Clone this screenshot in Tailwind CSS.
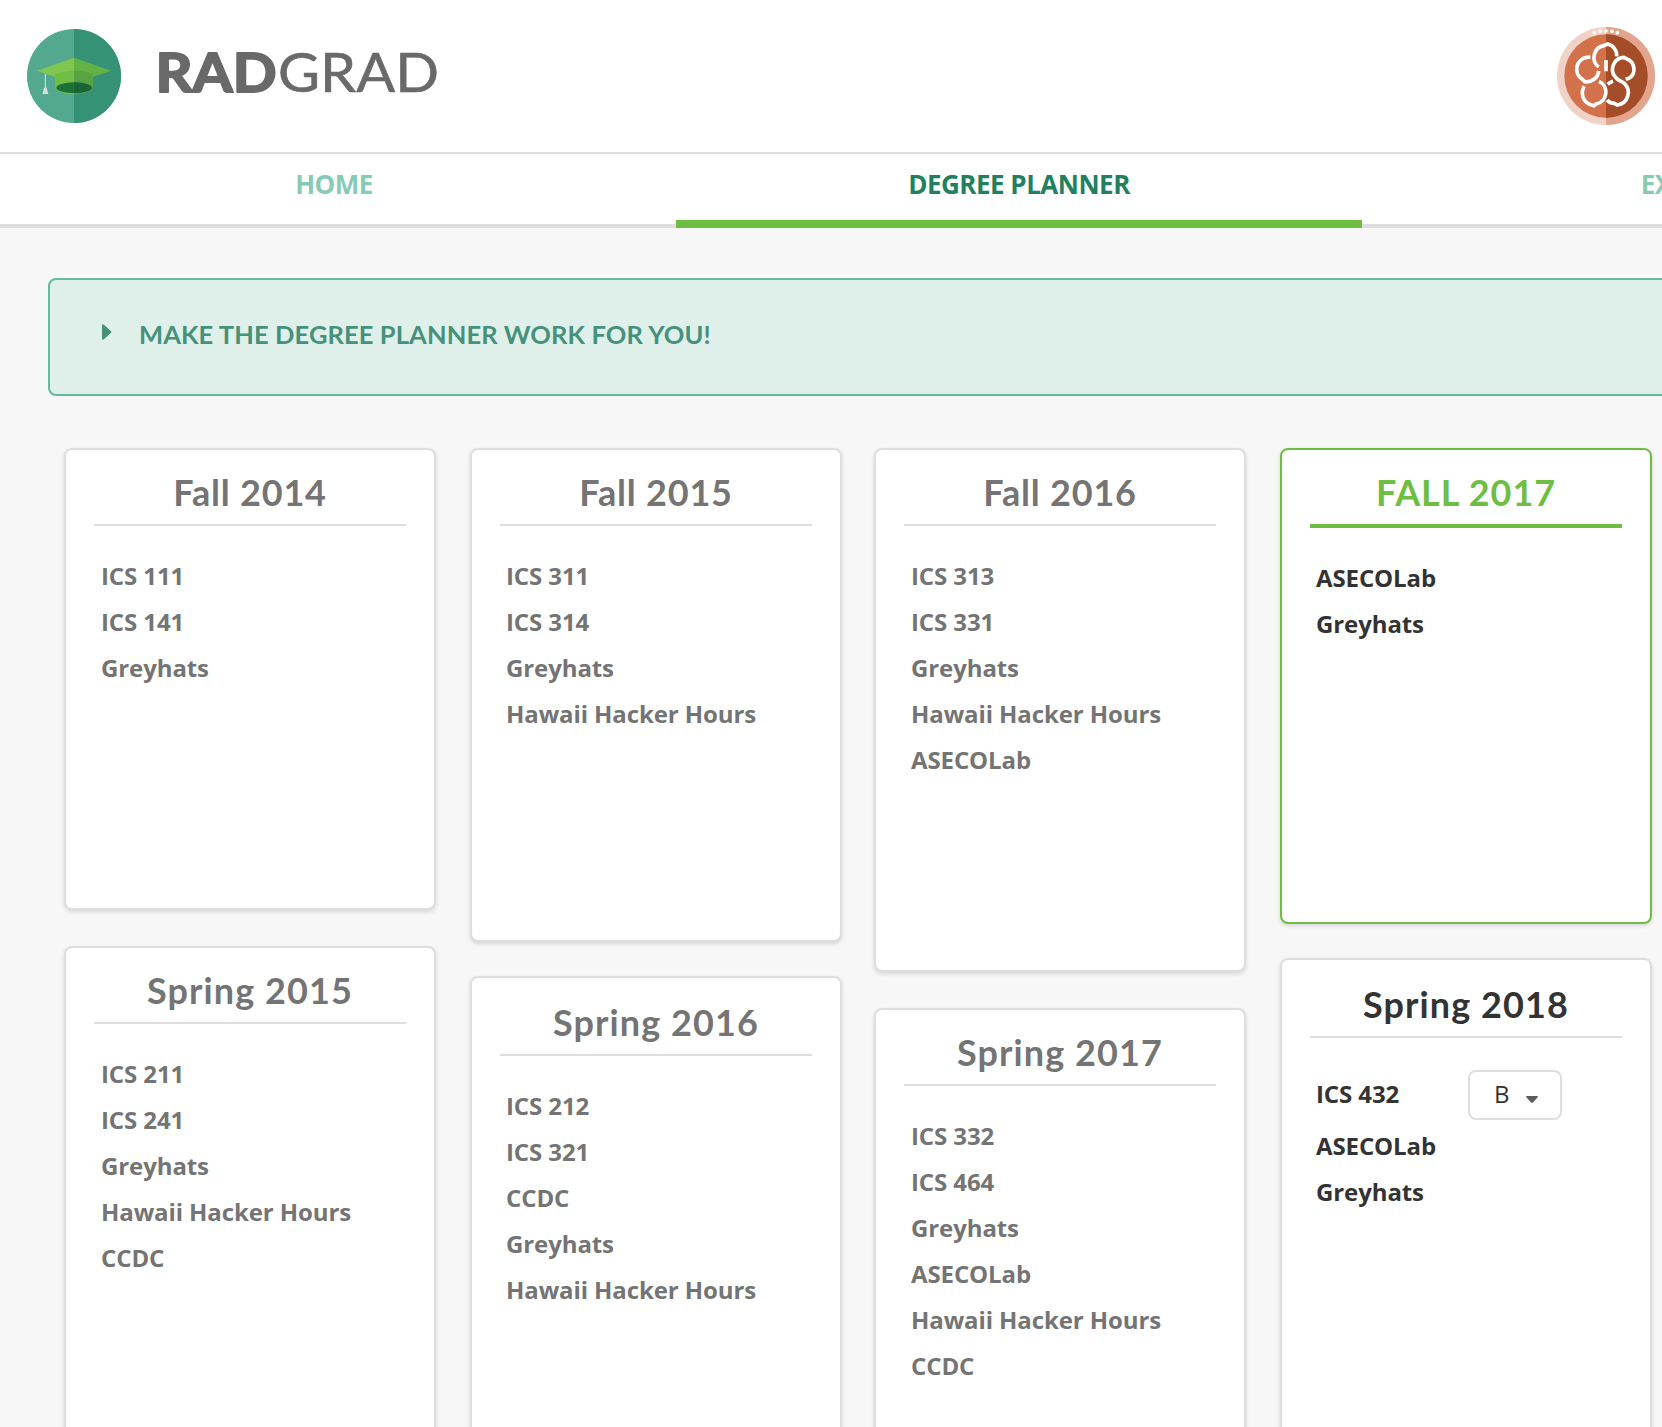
<!DOCTYPE html>
<html lang="en">
<head>
<meta charset="utf-8">
<title>RadGrad - Degree Planner</title>
<script src="https://cdn.jsdelivr.net/npm/@tailwindcss/browser@4"></script>
</head>
<body class="bg-[#f7f7f7]">
<div class="h-[1427px] w-[1662px] overflow-hidden bg-[#f7f7f7] font-['Open_Sans',sans-serif] text-[#333]">

<header class="flex h-[154px] items-start justify-between border-b-2 border-[#dedede] bg-white pr-[7px] pl-[27px]">
  <div class="flex items-start">
    <svg class="mt-[29px] size-[94px]" viewBox="81 87 282 282">
      <circle cx="222" cy="228" r="141" fill="#53a890"/>
      <path d="M222 87a141 141 0 0 1 0 282z" fill="#359277"/>
      <path d="M110 212L222 173V250z" fill="#80c651"/>
      <path d="M334 212L222 173V250z" fill="#63b246"/>
      <path d="M165 224q10-11 57-12v71q-50-1-57-22z" fill="#70be44"/>
      <path d="M279 224q-10-11-57-12v71q50-1 57-22z" fill="#5aa343"/>
      <ellipse cx="222" cy="263" rx="53" ry="16" fill="#1c7039"/>
      <path d="M222 247a53 16 0 0 1 0 32z" fill="#186437"/>
      <path d="M136 222V264" stroke="#dfe5e3" stroke-width="3"/>
      <path d="M132 263h8l5 19h-18z" fill="#dcdcdc"/>
    </svg>
    <svg class="mt-[36px] ml-[29px] h-[72px] w-[300px]" viewBox="0 0 300 72" fill="#696969" stroke="#696969" stroke-linejoin="round" font-family="Lato, sans-serif" font-size="54">
      <text x="5.500" y="55.500" font-weight="700" stroke-width="2" textLength="121" lengthAdjust="spacingAndGlyphs">RAD</text>
      <text x="128" y="55.500" font-weight="400" stroke-width="0.600" textLength="161" lengthAdjust="spacingAndGlyphs">GRAD</text>
    </svg>
  </div>
  <svg class="mt-[27px] size-[98px]" viewBox="51 50 294 294">
    <circle cx="198" cy="197" r="147" fill="#f1d2c6"/>
    <path d="M198 50a147 147 0 0 1 0 294z" fill="#e2a48d"/>
    <circle cx="198" cy="197" r="125" fill="#d3714a"/>
    <path d="M198 72a125 125 0 0 1 0 250z" fill="#a54d29"/>
    <g fill="#fff"><circle cx="163" cy="67" r="5.500"/><circle cx="180" cy="63" r="5.500"/><circle cx="198" cy="62" r="5.500"/><circle cx="216" cy="63" r="5.500"/><circle cx="232" cy="67" r="5.500"/></g>
    <g fill="none" stroke="#fff" stroke-width="11">
      <path d="M176 170A36 36 0 0 1 191 106L203 101A35 35 0 0 1 230 138"/>
      <path d="M151 140L140 141A36 36 0 0 0 127 207L135 214A36 36 0 0 0 176 182"/>
      <path d="M257 207L267 204A33 33 0 0 0 259 145L251 141A36 36 0 0 0 225 199C234 212 243 211 253 219A38 38 0 0 1 232 284L223 279Q209 279 201 269"/>
      <path d="M133 228A37 37 0 0 0 152 283L162 286L168 281A36 36 0 0 0 177 213"/>
      <path d="M203 222Q209 216 219 213M198 149V183"/>
    </g>
  </svg>
</header>

<nav class="flex h-[74px] overflow-hidden border-b-4 border-[#dedede] bg-white text-[26px] leading-[60px] font-bold tracking-[-0.5px] text-[#87cab5]">
  <a class="-ml-[8px] w-[684px] shrink-0 text-center">HOME</a>
  <a class="w-[686px] shrink-0 text-center text-[#20805f]">DEGREE PLANNER</a>
  <a class="w-[686px] shrink-0 text-center">EXPLORER</a>
</nav>
<div class="relative -mt-2 ml-[676px] h-2 w-[686px] bg-[#6fbe44]"></div>

<section class="mt-[50px] ml-[48px] flex h-[118px] w-[1700px] items-start rounded-lg border-2 border-[#66b99f] bg-[#dff0ea] pt-[36px] pl-[52px] text-[#45917a]">
  <svg class="mt-[8px] h-4 w-[10px]" viewBox="0 0 10 16" fill="currentColor"><path d="M0 1.2Q.5-.5 2 .8L9 7.2Q10 8 9 8.8L2 15.2Q.5 16.500 0 14.800z"/></svg>
  <h2 class="ml-[27px] font-['Lato',sans-serif] text-[25.5px] leading-[36px] font-bold tracking-[0.1px] whitespace-nowrap">MAKE THE DEGREE PLANNER WORK FOR YOU!</h2>
</section>

<main class="mt-[52px] flex items-start pl-[64px] text-2xl leading-[46px] font-bold tracking-[-0.1px] text-[#747474]">
  <div class="mr-[34px] flex w-[372px] shrink-0 flex-col gap-[36px]">
    <article class="h-[462px] rounded-lg border-2 border-[#dedede] bg-white px-7 shadow-[0_2px_4px_rgba(34,36,38,0.15)]">
      <h3 class="h-[76px] border-b-2 border-[#dedede] pt-[19px] text-center font-['Lato',sans-serif] text-[36px] tracking-[0.8px]">Fall 2014</h3>
      <ul class="pt-[27px] pl-[7px]"><li>ICS 111</li><li>ICS 141</li><li>Greyhats</li></ul>
    </article>
    <article class="h-[520px] rounded-lg border-2 border-[#dedede] bg-white px-7 shadow-[0_2px_4px_rgba(34,36,38,0.15)]">
      <h3 class="h-[76px] border-b-2 border-[#dedede] pt-[19px] text-center font-['Lato',sans-serif] text-[36px] tracking-[1.1px]">Spring 2015</h3>
      <ul class="pt-[27px] pl-[7px]"><li>ICS 211</li><li>ICS 241</li><li>Greyhats</li><li>Hawaii Hacker Hours</li><li>CCDC</li></ul>
    </article>
  </div>
  <div class="mr-[32px] flex w-[372px] shrink-0 flex-col gap-[34px]">
    <article class="h-[494px] rounded-lg border-2 border-[#dedede] bg-white px-7 shadow-[0_2px_4px_rgba(34,36,38,0.15)]">
      <h3 class="h-[76px] border-b-2 border-[#dedede] pt-[19px] text-center font-['Lato',sans-serif] text-[36px] tracking-[0.8px]">Fall 2015</h3>
      <ul class="pt-[27px] pl-[6px]"><li>ICS 311</li><li>ICS 314</li><li>Greyhats</li><li>Hawaii Hacker Hours</li></ul>
    </article>
    <article class="h-[520px] rounded-lg border-2 border-[#dedede] bg-white px-7 shadow-[0_2px_4px_rgba(34,36,38,0.15)]">
      <h3 class="h-[78px] border-b-2 border-[#dedede] pt-[21px] text-center font-['Lato',sans-serif] text-[36px] tracking-[1.1px]">Spring 2016</h3>
      <ul class="pt-[27px] pl-[6px]"><li>ICS 212</li><li>ICS 321</li><li>CCDC</li><li>Greyhats</li><li>Hawaii Hacker Hours</li></ul>
    </article>
  </div>
  <div class="mr-[34px] flex w-[372px] shrink-0 flex-col gap-[36px]">
    <article class="h-[524px] rounded-lg border-2 border-[#dedede] bg-white px-7 shadow-[0_2px_4px_rgba(34,36,38,0.15)]">
      <h3 class="h-[76px] border-b-2 border-[#dedede] pt-[19px] text-center font-['Lato',sans-serif] text-[36px] tracking-[0.8px]">Fall 2016</h3>
      <ul class="pt-[27px] pl-[7px]"><li>ICS 313</li><li>ICS 331</li><li>Greyhats</li><li>Hawaii Hacker Hours</li><li>ASECOLab</li></ul>
    </article>
    <article class="h-[520px] rounded-lg border-2 border-[#dedede] bg-white px-7 shadow-[0_2px_4px_rgba(34,36,38,0.15)]">
      <h3 class="h-[76px] border-b-2 border-[#dedede] pt-[19px] text-center font-['Lato',sans-serif] text-[36px] tracking-[1.1px]">Spring 2017</h3>
      <ul class="pt-[27px] pl-[7px]"><li>ICS 332</li><li>ICS 464</li><li>Greyhats</li><li>ASECOLab</li><li>Hawaii Hacker Hours</li><li>CCDC</li></ul>
    </article>
  </div>
  <div class="flex w-[372px] shrink-0 flex-col gap-[34px] text-[#333]">
    <article class="h-[476px] rounded-lg border-2 border-[#6fbe44] bg-white px-7 shadow-[0_2px_4px_rgba(34,36,38,0.15)]">
      <h3 class="h-[78px] border-b-4 border-[#6fbe44] pt-[19px] text-center font-['Lato',sans-serif] text-[36px] tracking-[0.9px] text-[#6fbe44]">FALL 2017</h3>
      <ul class="pt-[27px] pl-[6px]"><li>ASECOLab</li><li>Greyhats</li></ul>
    </article>
    <article class="h-[520px] rounded-lg border-2 border-[#dedede] bg-white px-7 shadow-[0_2px_4px_rgba(34,36,38,0.15)]">
      <h3 class="h-[78px] border-b-2 border-[#dedede] pt-[21px] text-center font-['Lato',sans-serif] text-[36px] tracking-[1.1px]">Spring 2018</h3>
      <ul class="pt-[27px] pl-[6px]">
        <li class="flex h-[58px] items-center">
          <span class="w-[152px]">ICS 432</span>
          <span class="mt-[2px] flex h-[50px] w-[94px] items-center rounded-lg border-2 border-[#dedede] pl-6 font-normal"><span class="-mt-[2px]">B</span>
            <svg class="mt-[8px] ml-[17px] h-[7px] w-3" viewBox="0 0 12 7" fill="#5c5c5c"><path d="M.8 0H11.200Q12.500.4 11.500 1.600L7 6.400Q6 7.300 5 6.400L.5 1.600Q-.5.4.8 0z"/></svg>
          </span>
        </li>
        <li>ASECOLab</li><li>Greyhats</li>
      </ul>
    </article>
  </div>
</main>
</div>
</body>
</html>
